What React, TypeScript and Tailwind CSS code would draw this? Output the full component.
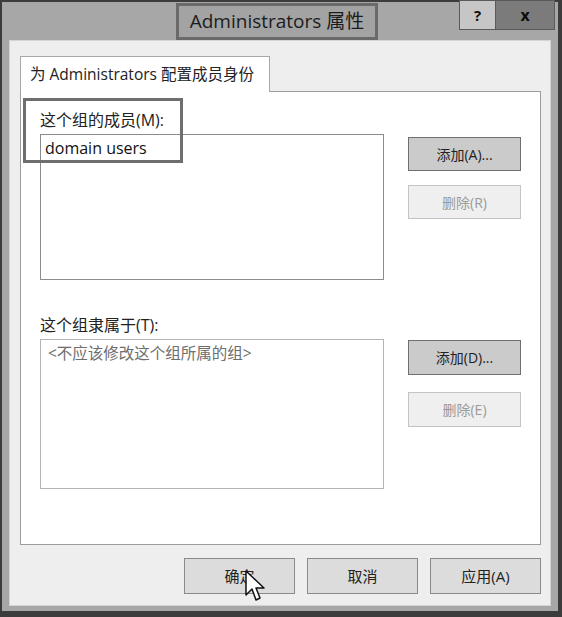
import React from 'react'

const font = { fontFamily: '"Open Sans", "Noto Sans CJK SC", sans-serif' }

function DlgButton({ label, disabled, dark, className }: { label: string; disabled?: boolean; dark?: boolean; className?: string }) {
  return (
    <div
      className={
        'flex items-center justify-center border ' +
        (disabled
          ? 'border-[#c4c4c4] bg-[#efefef] text-[#9a9a9a] '
          : dark
          ? 'border-[#6f6f6f] bg-[#cbcbcb] text-[#222] '
          : 'border-[#8a8a8a] bg-[#dcdcdc] text-[#222] ') +
        (className ?? '')
      }
    >
      {label}
    </div>
  )
}

function Cursor() {
  return (
    <svg className="absolute left-[245px] top-[570px]" width="22" height="36" viewBox="0 0 22 36">
      <path d="M1 1 L1 25 L7 19 L11 30 L15 28 L11 18 L19 18 Z" fill="#fff" stroke="#111" strokeWidth="1.5" strokeLinejoin="round" />
    </svg>
  )
}

export default function App() {
  return (
    <div className="relative h-[617px] w-[562px] bg-white" style={font}>
      <div className="flex h-full flex-col border-2 border-r-4 border-b-[6px] border-[#3c3c3c] bg-[#a7a7a7]">
        {/* title bar */}
        <div className="flex h-[38px] items-start">
          <div className="ml-[174px] mt-[1px] flex h-[37px] w-[202px] items-center justify-center border-[3px] border-[#6a6a6a] bg-[#a3a3a3] text-[19px] text-[#1c1c1c]">
            Administrators 属性
          </div>
          <div className="flex-1" />
          <div className="-mt-[2px] flex h-[30px]">
            <div className="flex w-[37px] items-center justify-center border border-[#5a5a5a] bg-[#c6c6c6] text-[15px] font-bold text-[#111]">?</div>
            <div className="flex w-[59px] items-center justify-center border border-l-0 border-[#5a5a5a] bg-[#7b7b7b] text-[16px] font-bold text-[#0d0d0d]">x</div>
          </div>
          <div className="w-[3px]" />
        </div>

        {/* client */}
        <div className="mx-[7px] mb-[5px] flex flex-1 flex-col border border-[#d4d4d4] bg-[#eeeeee] pl-[10px] pt-[15px]">
          <div className="relative z-10 -mb-px flex h-[36px] w-[250px] items-center border border-b-0 border-[#a8a8a8] bg-white pl-[9px] text-[15.5px] text-[#222]">
            为 Administrators 配置成员身份
          </div>
          <div className="relative flex h-[454px] w-[521px] flex-col border border-[#9c9c9c] bg-white pl-[19px] pt-[16px]">
            {/* annotation box */}
            <div className="absolute left-[2px] top-[6px] h-[65px] w-[160px] border-[3px] border-[#6e6e6e]" />

            <div className="flex">
              <div className="flex w-[344px] flex-col">
                <div className="h-[24px] text-[16px] leading-[24px] text-[#222]">这个组的成员(M):</div>
                <div className="mt-[2px] h-[146px] border border-[#8c8c8c] pl-[4px] pt-[1px] text-[16px] text-[#111]">domain users</div>
              </div>
              <div className="ml-[24px] flex flex-col pt-[29px]">
                <DlgButton label="添加(A)..." dark className="h-[34px] w-[113px] text-[14px]" />
                <DlgButton label="删除(R)" disabled className="mt-[14px] h-[34px] w-[113px] text-[14px]" />
              </div>
            </div>

            <div className="mt-[33px] flex">
              <div className="flex w-[344px] flex-col">
                <div className="h-[24px] text-[16px] leading-[24px] text-[#222]">这个组隶属于(T):</div>
                <div className="mt-[2px] h-[150px] border border-[#b4b4b4] pl-[7px] pt-[2px] text-[15.5px] text-[#6e6e6e]">&lt;不应该修改这个组所属的组&gt;</div>
              </div>
              <div className="ml-[24px] flex flex-col pt-[27px]">
                <DlgButton label="添加(D)..." dark className="h-[35px] w-[113px] text-[14px]" />
                <DlgButton label="删除(E)" disabled className="mt-[17px] h-[35px] w-[113px] text-[14px]" />
              </div>
            </div>
          </div>

          <div className="mt-[13px] flex w-[521px] justify-end gap-[12px]">
            <DlgButton label="确定" className="h-[36px] w-[111px] text-[15px]" />
            <DlgButton label="取消" className="h-[36px] w-[111px] text-[15px]" />
            <DlgButton label="应用(A)" className="h-[36px] w-[111px] text-[15px]" />
          </div>
        </div>
      </div>
      <Cursor />
    </div>
  )
}
